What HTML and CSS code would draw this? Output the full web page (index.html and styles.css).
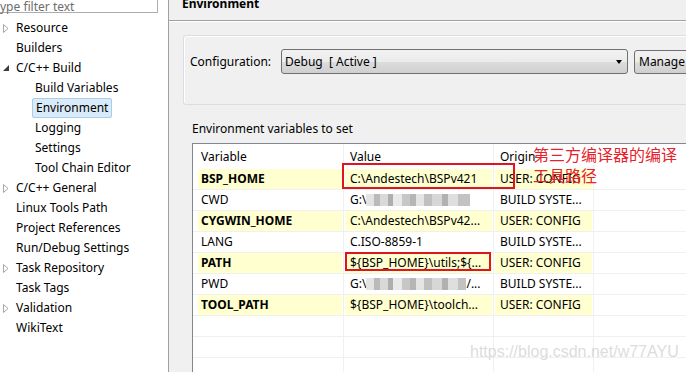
FILE: index.html
```html
<!DOCTYPE html>
<html lang="en">
<head>
    <meta charset="UTF-8">
    <title>Properties - Environment</title>
    <link rel="stylesheet" href="styles.css">
</head>
<body>
<div class="window">
    <div class="sidebar">
        <div class="filter">ype filter text</div>
        <ul class="tree">
            <li class="node"><span class="twisty"><svg width="6" height="9" viewBox="0 0 6 9"><path d="M0.5 0.5 L5 4.5 L0.5 8.5 Z" fill="#fff" stroke="#a6a6a6"/></svg></span>Resource</li>
            <li class="node"><span class="twisty"></span>Builders</li>
            <li class="node"><span class="twisty"><svg width="6" height="6" viewBox="0 0 6 6"><path d="M6 0 L6 6 L0 6 Z" fill="#3c3c3c"/></svg></span>C/C++ Build</li>
            <li class="node child">Build Variables</li>
            <li class="node child"><span class="selected">Environment</span></li>
            <li class="node child">Logging</li>
            <li class="node child">Settings</li>
            <li class="node child">Tool Chain Editor</li>
            <li class="node"><span class="twisty"><svg width="6" height="9" viewBox="0 0 6 9"><path d="M0.5 0.5 L5 4.5 L0.5 8.5 Z" fill="#fff" stroke="#a6a6a6"/></svg></span>C/C++ General</li>
            <li class="node"><span class="twisty"></span>Linux Tools Path</li>
            <li class="node"><span class="twisty"></span>Project References</li>
            <li class="node"><span class="twisty"></span>Run/Debug Settings</li>
            <li class="node"><span class="twisty"><svg width="6" height="9" viewBox="0 0 6 9"><path d="M0.5 0.5 L5 4.5 L0.5 8.5 Z" fill="#fff" stroke="#a6a6a6"/></svg></span>Task Repository</li>
            <li class="node"><span class="twisty"></span>Task Tags</li>
            <li class="node"><span class="twisty"><svg width="6" height="9" viewBox="0 0 6 9"><path d="M0.5 0.5 L5 4.5 L0.5 8.5 Z" fill="#fff" stroke="#a6a6a6"/></svg></span>Validation</li>
            <li class="node"><span class="twisty"></span>WikiText</li>
        </ul>
    </div>

    <div class="content">
        <div class="page-head"><div class="page-title">Environment</div></div>

        <div class="group">
            <span class="config-label">Configuration:</span>
            <div class="combo">Debug&nbsp;&nbsp;[ Active ]<span class="combo-arrow"></span></div>
            <div class="btn">Manage Configurations...</div>
        </div>

        <div class="section-label">Environment variables to set</div>

        <table class="vars">
            <colgroup>
                <col class="c-var"><col class="c-val"><col class="c-org"><col>
            </colgroup>
            <tr class="head">
                <td class="first"><div class="cell">Variable</div></td>
                <td><div class="cell">Value</div></td>
                <td><div class="cell">Origin</div></td>
                <td></td>
            </tr>
            <tr class="user">
                <td class="first"><div class="cell name">BSP_HOME</div></td>
                <td><div class="cell">C:\Andestech\BSPv421</div></td>
                <td><div class="cell">USER: CONFIG</div></td>
                <td></td>
            </tr>
            <tr>
                <td class="first"><div class="cell">CWD</div></td>
                <td><div class="cell">G:\<span class="blur"></span></div></td>
                <td><div class="cell">BUILD SYSTE...</div></td>
                <td></td>
            </tr>
            <tr class="user">
                <td class="first"><div class="cell name">CYGWIN_HOME</div></td>
                <td><div class="cell">C:\Andestech\BSPv42...</div></td>
                <td><div class="cell">USER: CONFIG</div></td>
                <td></td>
            </tr>
            <tr>
                <td class="first"><div class="cell">LANG</div></td>
                <td><div class="cell">C.ISO-8859-1</div></td>
                <td><div class="cell">BUILD SYSTE...</div></td>
                <td></td>
            </tr>
            <tr class="user">
                <td class="first"><div class="cell name">PATH</div></td>
                <td><div class="cell">${BSP_HOME}\utils;${...</div></td>
                <td><div class="cell">USER: CONFIG</div></td>
                <td></td>
            </tr>
            <tr>
                <td class="first"><div class="cell">PWD</div></td>
                <td><div class="cell">G:\<span class="blur short"></span>/...</div></td>
                <td><div class="cell">BUILD SYSTE...</div></td>
                <td></td>
            </tr>
            <tr class="user">
                <td class="first"><div class="cell name">TOOL_PATH</div></td>
                <td><div class="cell">${BSP_HOME}\toolch...</div></td>
                <td><div class="cell">USER: CONFIG</div></td>
                <td></td>
            </tr>
            <tr><td class="first"><div class="cell"></div></td><td></td><td></td><td></td></tr>
            <tr><td class="first"><div class="cell"></div></td><td></td><td></td><td></td></tr>
            <tr><td class="first"><div class="cell"></div></td><td></td><td></td><td></td></tr>
        </table>
    </div>

    <!-- annotations drawn over the screenshot -->
    <div class="mark mark-bsp"></div>
    <div class="mark mark-path"></div>
    <div class="note">第三方编译器的编译<br>工具路径</div>
    <div class="watermark">https://blog.csdn.net/w77AYU</div>
</div>
</body>
</html>
```

FILE: styles.css
```css
html, body{
    margin: 0;
    padding: 0;
}
body{
    font: 12px/20px "Noto Sans", "Liberation Sans", sans-serif;
    color: #000;
    background: #fff;
}
.window{
    position: relative;
    display: flex;
    width: 686px;
    height: 372px;
    overflow: hidden;
}

/* left: preference tree */
.sidebar{
    width: 168px;
    flex: none;
    background: #fff;
    border-right: 1px solid #a0a0a0;
}
.filter{
    box-sizing: border-box;
    width: 178px;
    height: 20px;
    margin: -7px 0 0 -20px;
    padding: 0 0 0 19px;
    border: 1px solid #abadb3;
    line-height: 26px;
    color: #6d6d6d;
    background: #fff;
}
.tree{
    list-style: none;
    margin: 5px 0 0;
    padding: 0;
}
.node{
    display: flex;
    align-items: center;
    height: 20px;
    white-space: nowrap;
}
.twisty{
    display: flex;
    align-items: center;
    width: 16px;
    padding-left: 3px;
    box-sizing: border-box;
    flex: none;
}
.child{
    padding-left: 35px;
}
.selected{
    margin-left: -3px;
    padding: 0 3px;
    line-height: 18px;
    background: #d9ebf9;
    border: 1px solid #a6cdee;
    border-radius: 2px;
}

/* right: property page */
.content{
    flex: 1;
    background: #f0f0f0;
    min-width: 0;
}
.page-head{
    display: flow-root;
    height: 20px;
    border-bottom: 1px solid #a0a0a0;
    box-shadow: 0 1px 0 #fff;
}
.page-title{
    margin: -6px 0 0 13px;
    font-weight: bold;
    line-height: 20px;
}
.group{
    display: flex;
    align-items: flex-start;
    box-sizing: border-box;
    width: 560px;
    height: 70px;
    margin: 14px 0 0 14px;
    padding: 13px 0 0 6px;
    border: 1px solid #d5dfe5;
    border-radius: 3px;
    box-shadow: inset 1px 1px 0 #fff;
}
.config-label{
    width: 91px;
    flex: none;
    line-height: 25px;
}
.combo{
    position: relative;
    box-sizing: border-box;
    width: 347px;
    height: 25px;
    flex: none;
    padding-left: 3px;
    line-height: 23px;
    border: 1px solid #707070;
    border-radius: 3px;
    background: linear-gradient(#f2f2f2, #ebebeb 50%, #dddddd 51%, #cfcfcf);
}
.combo-arrow{
    position: absolute;
    right: 5px;
    top: 10px;
    border-left: 3px solid transparent;
    border-right: 3px solid transparent;
    border-top: 4px solid #000;
}
.btn{
    box-sizing: border-box;
    height: 24px;
    margin: 1px 0 0 6px;
    padding: 0 4px;
    line-height: 22px;
    white-space: nowrap;
    border: 1px solid #707070;
    border-radius: 3px;
    background: linear-gradient(#f2f2f2, #ebebeb 50%, #dddddd 51%, #cfcfcf);
}
.section-label{
    margin: 16px 0 0 23px;
    line-height: 16px;
}

/* variables table */
.vars{
    margin: 6px 0 0 23px;
    width: 560px;
    table-layout: fixed;
    border-collapse: separate;
    border-spacing: 0;
    border-left: 1px solid #828790;
    border-top: 1px solid #828790;
    background: #fff;
}
.c-var{ width: 151px; }
.c-val{ width: 150px; }
.c-org{ width: 100px; }
.vars td{
    padding: 0;
    height: 20px;
    border-right: 1px solid #f0f0f0;
    border-bottom: 1px solid #f0f0f0;
    white-space: nowrap;
    overflow: hidden;
}
.vars .head td{
    height: 25px;
    border-bottom: 0;
}
.cell{
    height: 20px;
    margin: 0 1px 0 1px;
    padding-left: 5px;
    line-height: 20px;
    overflow: hidden;
}
.first .cell{
    margin-left: 5px;
    padding-left: 3px;
}
.head .cell{
    height: 25px;
    line-height: 25px;
}
.user .cell{
    background: #ffffcf;
}
.name{
    font-weight: bold;
}
.blur{
    display: inline-block;
    width: 104px;
    height: 12px;
    vertical-align: -2px;
    background:
        linear-gradient(90deg, #dcdcdc 0 8px, #a9a9a9 8px 14px, #cfcfcf 14px 22px, #9a9a9a 22px 27px, #e4e4e4 27px 36px, #b9b9b9 36px 44px, #a3a3a3 44px 50px, #dedede 50px 58px, #b0b0b0 58px 66px, #cdcdcd 66px 76px, #9d9d9d 76px 82px, #d6d6d6 82px 92px, #b3b3b3 92px 104px);
    opacity: 0.8;
}
.blur.short{
    width: 100px;
}

/* red annotation */
.mark{
    position: absolute;
    border: 2px solid #e0141e;
}
.mark-bsp{
    left: 342px;
    top: 163px;
    width: 169px;
    height: 22px;
}
.mark-path{
    left: 345px;
    top: 252px;
    width: 142px;
    height: 15px;
}
.note{
    position: absolute;
    left: 533px;
    top: 144px;
    font: 16px/21px "Noto Sans CJK SC", sans-serif;
    color: #e8222c;
}
.watermark{
    position: absolute;
    left: 470px;
    top: 342px;
    font: 16px/20px "Liberation Sans", sans-serif;
    color: rgba(190, 190, 190, 0.55);
}
```
